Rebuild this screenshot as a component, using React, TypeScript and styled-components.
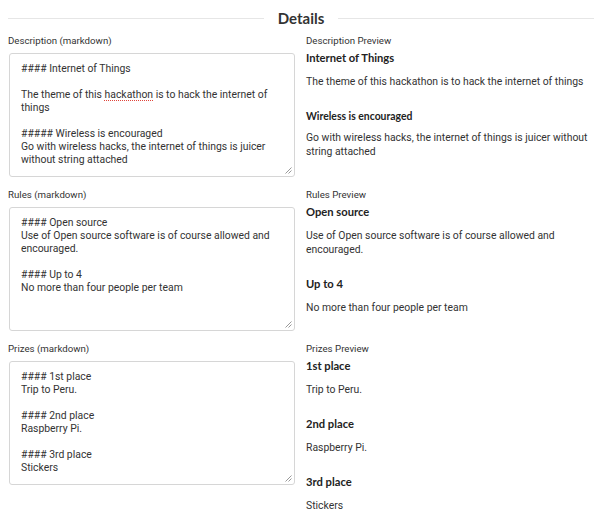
import React from "react";
import styled, { createGlobalStyle } from "styled-components";

const GlobalStyle = createGlobalStyle`
  html, body { margin: 0; padding: 0; background: #fff; }
  body { font-family: Roboto, "Liberation Sans", sans-serif; color: #333; }
`;

const Page = styled.div`
  padding: 9px 8px 0 8px;
`;

const SectionHeader = styled.div`
  display: flex;
  align-items: center;
  gap: 14px;
  height: 18px;
  margin-bottom: 7px;
  &::before, &::after {
    content: "";
    flex: 1;
    height: 1px;
    background: #e6e6e6;
  }
`;

const HeaderTitle = styled.h3`
  margin: 0;
  font-family: Lato, "Liberation Sans", sans-serif;
  font-weight: 700;
  font-size: 15px;
  line-height: 18px;
  color: #333;
`;

const Grid = styled.div`
  display: grid;
  grid-template-columns: 1fr 1fr;
  column-gap: 10px;
  row-gap: 11px;
`;

const Field = styled.div`
  display: flex;
  flex-direction: column;
  min-width: 0;
`;

const Label = styled.label<{ $gap?: number }>`
  font-family: Roboto, "Liberation Sans", sans-serif;
  font-size: 9.7px;
  line-height: 14px;
  color: #333;
  margin-bottom: ${(p) => p.$gap ?? 5}px;
`;

const Editor = styled.div`
  position: relative;
  box-sizing: border-box;
  margin-left: 1px;
  width: 286px;
  height: 124px;
  padding: 8px 10px 8px 11px;
  border: 1px solid #d6d6d6;
  border-radius: 3px;
  font-family: Roboto, "Liberation Sans", sans-serif;
  font-size: 10.4px;
  line-height: 13px;
  color: #333;
  white-space: pre-wrap;
  overflow: hidden;
  background: #fff;
`;

const Misspelled = styled.span`
  text-decoration: underline dotted #e0443a;
  text-decoration-thickness: 1.2px;
  text-underline-offset: 2px;
`;

const Grip = styled.svg`
  position: absolute;
  right: 2px;
  bottom: 2px;
  width: 7px;
  height: 7px;
`;

const Preview = styled.div`
  font-family: Roboto, "Liberation Sans", sans-serif;
  font-size: 10.4px;
  line-height: 14px;
  color: #333;
`;

const H4 = styled.h4<{ $first?: boolean }>`
  font-family: Lato, "Liberation Sans", sans-serif;
  font-weight: 700;
  font-size: 11.2px;
  line-height: 14px;
  color: #222;
  margin: ${(p) => (p.$first ? "0" : "20px")} 0 10px;
`;

const H5 = styled.h5`
  font-family: Lato, "Liberation Sans", sans-serif;
  font-weight: 700;
  font-size: 10.4px;
  line-height: 14px;
  color: #222;
  margin: 20px 0 8px;
`;

const P = styled.p`
  margin: 0;
`;

const ResizeGrip = () => (
  <Grip viewBox="0 0 7 7">
    <line x1="0.5" y1="6.5" x2="6.5" y2="0.5" stroke="#999" strokeWidth="1" />
    <line x1="3.5" y1="6.5" x2="6.5" y2="3.5" stroke="#999" strokeWidth="1" />
  </Grip>
);

export default function App() {
  return (
    <>
      <GlobalStyle />
      <Page>
        <SectionHeader>
          <HeaderTitle>Details</HeaderTitle>
        </SectionHeader>
        <Grid>
          <Field>
            <Label>Description (markdown)</Label>
            <Editor role="textbox">
              {"#### Internet of Things\n\nThe theme of this "}
              <Misspelled>hackathon</Misspelled>
              {" is to hack the internet of things\n\n##### Wireless is encouraged\nGo with wireless hacks, the internet of things is juicer without string attached"}
              <ResizeGrip />
            </Editor>
          </Field>
          <Field>
            <Label $gap={3}>Description Preview</Label>
            <Preview>
              <H4 $first>Internet of Things</H4>
              <P>The theme of this hackathon is to hack the internet of things</P>
              <H5>Wireless is encouraged</H5>
              <P>Go with wireless hacks, the internet of things is juicer without string attached</P>
            </Preview>
          </Field>

          <Field>
            <Label>Rules (markdown)</Label>
            <Editor role="textbox">
              {"#### Open source\nUse of Open source software is of course allowed and encouraged.\n\n#### Up to 4\nNo more than four people per team"}
              <ResizeGrip />
            </Editor>
          </Field>
          <Field>
            <Label $gap={3}>Rules Preview</Label>
            <Preview>
              <H4 $first>Open source</H4>
              <P>Use of Open source software is of course allowed and encouraged.</P>
              <H4>Up to 4</H4>
              <P>No more than four people per team</P>
            </Preview>
          </Field>

          <Field>
            <Label>Prizes (markdown)</Label>
            <Editor role="textbox">
              {"#### 1st place\nTrip to Peru.\n\n#### 2nd place\nRaspberry Pi.\n\n#### 3rd place\nStickers"}
              <ResizeGrip />
            </Editor>
          </Field>
          <Field>
            <Label $gap={3}>Prizes Preview</Label>
            <Preview>
              <H4 $first>1st place</H4>
              <P>Trip to Peru.</P>
              <H4>2nd place</H4>
              <P>Raspberry Pi.</P>
              <H4>3rd place</H4>
              <P>Stickers</P>
            </Preview>
          </Field>
        </Grid>
      </Page>
    </>
  );
}
